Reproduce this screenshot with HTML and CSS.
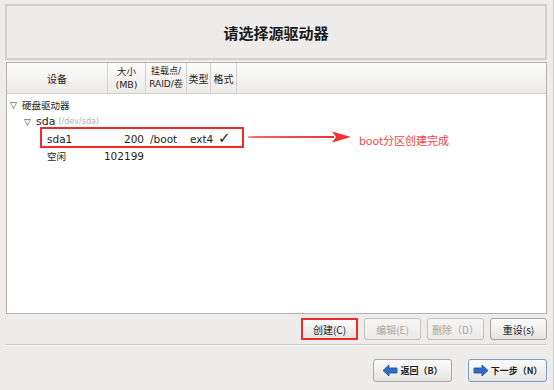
FILE: index.html
```html
<!DOCTYPE html>
<html lang="zh-CN">
<head>
    <meta charset="UTF-8">
    <title>请选择源驱动器</title>
    <link rel="stylesheet" href="styles.css">
</head>
<body>
    <div class="screen">
        <div class="title-box">
            <h1>请选择源驱动器</h1>
        </div>

        <div class="panel">
            <div class="head">
                <div class="col c-dev">设备</div>
                <div class="col c-size">大小<br>(MB)</div>
                <div class="col c-mount">挂载点/<br>RAID/卷</div>
                <div class="col c-type">类型</div>
                <div class="col c-fmt">格式</div>
                <div class="col c-rest"></div>
            </div>

            <div class="rows">
                <div class="row lvl0"><span class="tri">&#9661;</span><span class="cjk">硬盘驱动器</span></div>
                <div class="row lvl1"><span class="tri">&#9661;</span>sda <span class="muted">(/dev/sda)</span></div>
                <div class="row lvl2">
                    <span class="name">sda1</span>
                    <span class="size">200</span>
                    <span class="mount">/boot</span>
                    <span class="type">ext4</span>
                    <span class="check">&#10003;</span>
                </div>
                <div class="row lvl2">
                    <span class="name cjk">空闲</span>
                    <span class="size">102199</span>
                </div>
            </div>

            <div class="mark-box"></div>
            <svg class="mark-arrow" width="104" height="12" viewBox="0 0 104 12">
                <path d="M0 5.4 L86 5.0 L86 7.0 L0 6.6 Z" fill="#f23030"/>
                <path d="M84 0.5 L103 6 L84 11.5 L88 6 Z" fill="#f23030"/>
            </svg>
            <div class="mark-text">boot分区创建完成</div>
        </div>

        <div class="actions">
            <button class="btn btn-create">创建(C)</button>
            <button class="btn" disabled>编辑(E)</button>
            <button class="btn" disabled>删除（D）</button>
            <button class="btn">重设(s)</button>
        </div>

        <div class="separator"></div>

        <div class="nav">
            <button class="btn nav-btn">
                <svg width="16" height="13" viewBox="0 0 16 13"><path d="M1 6.5 L7 1 L7 4 L15 4 L15 9 L7 9 L7 12 Z" fill="#2d6fc0" stroke="#1d4f92" stroke-width="0.8"/></svg>
                返回（B）
            </button>
            <button class="btn nav-btn nav-next">
                <svg width="16" height="13" viewBox="0 0 16 13"><path d="M15 6.5 L9 1 L9 4 L1 4 L1 9 L9 9 L9 12 Z" fill="#2d6fc0" stroke="#1d4f92" stroke-width="0.8"/></svg>
                下一步（N）
            </button>
        </div>
    </div>
</body>
</html>
```

FILE: styles.css
```css
* {
    margin: 0;
    padding: 0;
    box-sizing: border-box;
}

body {
    background: #edecea;
    font-family: 'DejaVu Sans', 'Noto Sans CJK SC', sans-serif;
    color: #1e1e1e;
}

.screen {
    width: 554px;
    height: 390px;
    padding: 4px 6px 0 5px;
    border-right: 1px solid #c9c7c4;
    position: relative;
}

.title-box {
    height: 56px;
    border: 2px solid #d2d0cd;
    display: flex;
    align-items: center;
    justify-content: center;
}

.title-box h1 {
    font-family: 'Noto Sans CJK SC', sans-serif;
    font-size: 15px;
    font-weight: 700;
    color: #1a1a1a;
}

.panel {
    position: relative;
    margin: 2px 0 0 1px;
    height: 252px;
    background: white;
    border: 1px solid #b4b2af;
}

.head {
    display: flex;
    height: 31px;
    background: linear-gradient(#fbfbfa, #ecebe9);
    border-bottom: 1px solid #cfcdca;
    font-family: 'Noto Sans CJK SC', sans-serif;
    font-size: 10px;
    line-height: 13px;
}

.col {
    display: flex;
    align-items: center;
    justify-content: center;
    text-align: center;
    border-right: 1px solid #d3d1ce;
}

.c-dev { width: 101px; }
.c-size { width: 38px; font-family: 'DejaVu Sans', 'Noto Sans CJK SC', sans-serif; font-size: 9.5px; }
.c-mount { width: 41px; font-family: 'DejaVu Sans', 'Noto Sans CJK SC', sans-serif; font-size: 9px; }
.c-type { width: 24px; }
.c-fmt { width: 26px; }
.c-rest { flex: 1; border-right: none; }

.rows {
    padding-top: 2px;
    font-size: 10.5px;
}

.row {
    display: flex;
    align-items: center;
    height: 17px;
    white-space: nowrap;
}

.cjk {
    font-family: 'Noto Sans CJK SC', sans-serif;
    font-size: 9.5px;
}

.tri {
    font-size: 9px;
    font-weight: 700;
    color: #333;
    width: 12px;
}

.lvl0 { padding-left: 3px; }
.lvl1 { padding-left: 17px; font-size: 11px; }
.lvl2 { padding-left: 40px; }

.muted {
    color: #b0b0b0;
    font-size: 8px;
    margin-left: 3px;
}

.name { width: 56px; }
.size { width: 41px; text-align: right; }
.mount { width: 40px; margin-left: 6px; }
.type { width: 28px; }
.check { font-size: 15px; color: #222; margin-top: -2px; }

.mark-box {
    position: absolute;
    left: 33px;
    top: 64px;
    width: 204px;
    height: 21px;
    border: 2px solid #ee2a2a;
}

.mark-arrow {
    position: absolute;
    left: 241px;
    top: 68px;
}

.mark-text {
    position: absolute;
    left: 352px;
    top: 69px;
    font-family: 'Noto Sans CJK SC', sans-serif;
    font-size: 11px;
    color: #f2454a;
}

.actions {
    display: flex;
    justify-content: flex-end;
    gap: 6px;
    margin-top: 4px;
    height: 22px;
}

.btn {
    width: 57px;
    height: 22px;
    background: linear-gradient(#fcfcfc, #e5e4e2);
    border: 1px solid #a4a29f;
    border-radius: 3px;
    font-family: 'Noto Sans CJK SC', 'DejaVu Sans', sans-serif;
    font-size: 10px;
    color: #1e1e1e;
}

.btn:disabled {
    color: #a7a6a4;
    border-color: #c3c1be;
    background: linear-gradient(#f6f6f5, #eceae8);
}

.btn-create {
    border: 2px solid #ec2b2b;
    border-radius: 0;
}

.separator {
    margin-top: 4px;
    border-top: 1px solid #cfcdca;
    border-bottom: 1px solid #f8f8f7;
}

.nav {
    display: flex;
    justify-content: flex-end;
    gap: 16px;
    margin-top: 13px;
}

.nav-btn {
    width: 79px;
    height: 23px;
    display: flex;
    align-items: center;
    justify-content: center;
    gap: 2px;
    font-size: 9px;
    font-weight: 700;
    border-color: #a9a7a4;
}

.nav-next {
    border-color: #7f9cc4;
}
```
